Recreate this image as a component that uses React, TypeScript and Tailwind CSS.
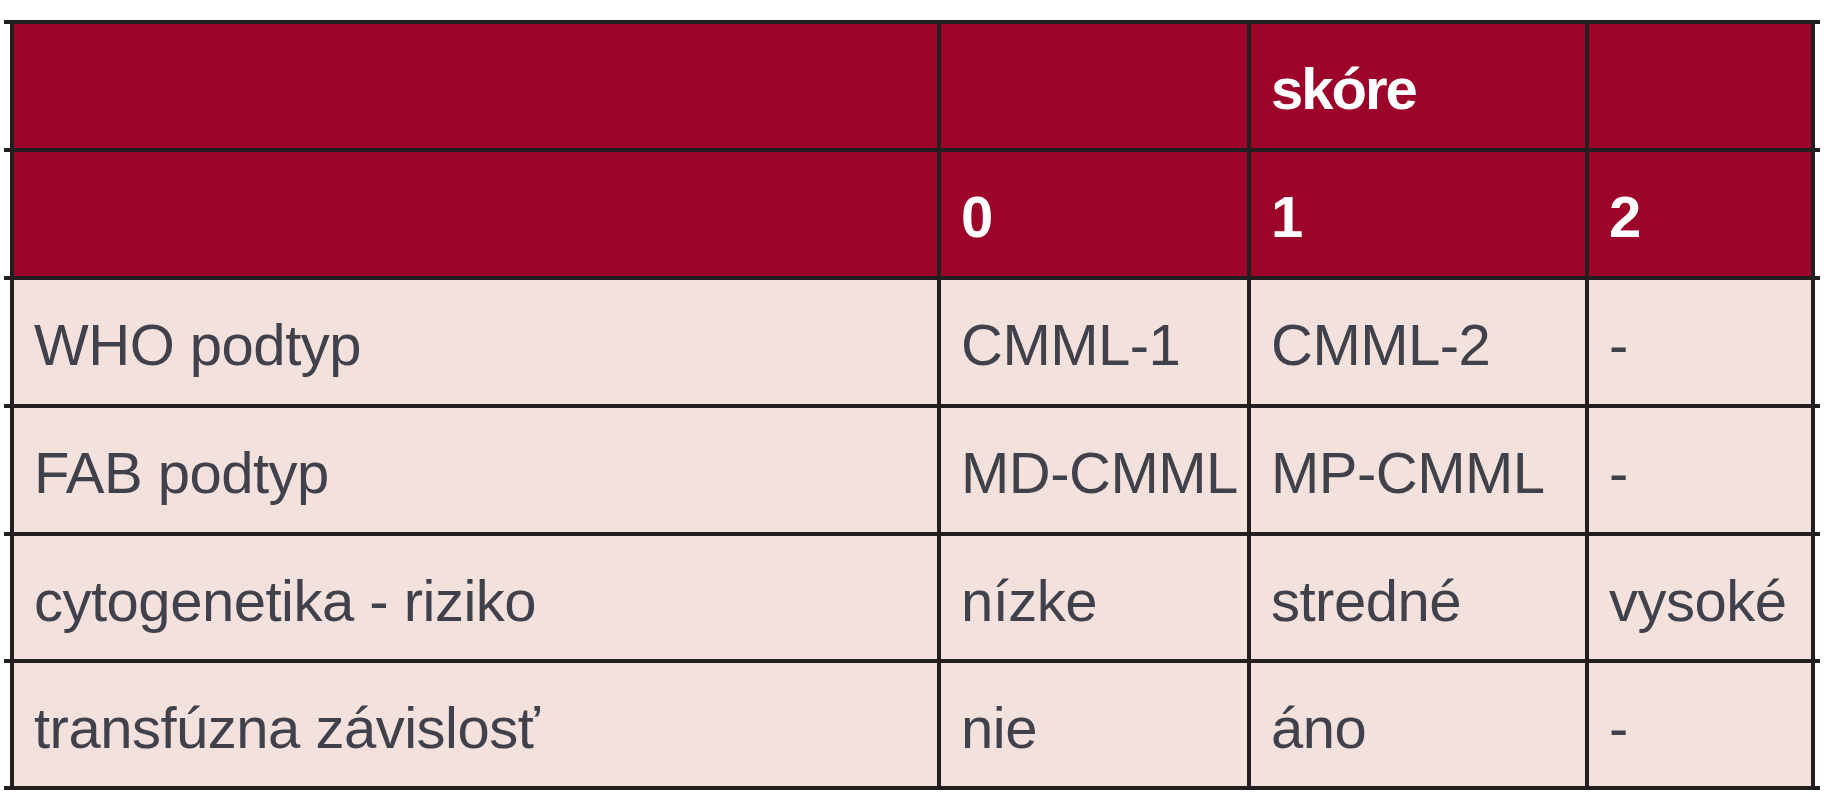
const head = [
  ['', '', 'skóre', ''],
  ['', '0', '1', '2'],
];

const body = [
  ['WHO podtyp', 'CMML-1', 'CMML-2', '-'],
  ['FAB podtyp', 'MD-CMML', 'MP-CMML', '-'],
  ['cytogenetika - riziko', 'nízke', 'stredné', 'vysoké'],
  ['transfúzna závislosť', 'nie', 'áno', '-'],
];

const heights = ['h-[124px]', 'h-[124px]', 'h-[124px]', 'h-[124px]', 'h-[123px]', 'h-[123px]'];

function Line() {
  return <div className="h-[4px] w-full bg-[#231f20]" />;
}

function Row({ cells, header, height }: { cells: string[]; header?: boolean; height: string }) {
  const bg = header ? 'bg-[#9c0429]' : 'bg-[#f2e1dc]';
  const text = header
    ? 'text-white font-bold tracking-[-2px]'
    : 'text-[#41414b] tracking-[-0.5px]';
  return (
    <div className={`flex ${height}`}>
      <div className="w-[6px] shrink-0" />
      <div className={`w-[927px] border-l-4 border-[#231f20] ${bg} flex items-center pl-5 pt-[6px] ${text}`}>
        {cells[0]}
      </div>
      <div className={`w-[310px] border-l-4 border-[#231f20] ${bg} flex items-center pl-5 pt-[6px] ${text}`}>
        {cells[1]}
      </div>
      <div className={`w-[338px] border-l-4 border-[#231f20] ${bg} flex items-center pl-5 pt-[6px] ${text}`}>
        {cells[2]}
      </div>
      <div className={`w-[230px] border-x-4 border-[#231f20] ${bg} flex items-center pl-5 pt-[6px] ${text}`}>
        {cells[3]}
      </div>
      <div className="w-[5px] shrink-0" />
    </div>
  );
}

export default function App() {
  return (
    <div className="min-h-screen bg-white pt-[20px] pl-[4px] font-['Liberation_Sans',Arial,sans-serif] text-[58px] leading-[58px] whitespace-nowrap">
      <div className="w-[1816px]">
        <Line />
        {head.map((cells, i) => (
          <div key={'h' + i}>
            <Row cells={cells} header height={heights[i]} />
            <Line />
          </div>
        ))}
        {body.map((cells, i) => (
          <div key={'b' + i}>
            <Row cells={cells} height={heights[i + 2]} />
            <Line />
          </div>
        ))}
      </div>
    </div>
  );
}
